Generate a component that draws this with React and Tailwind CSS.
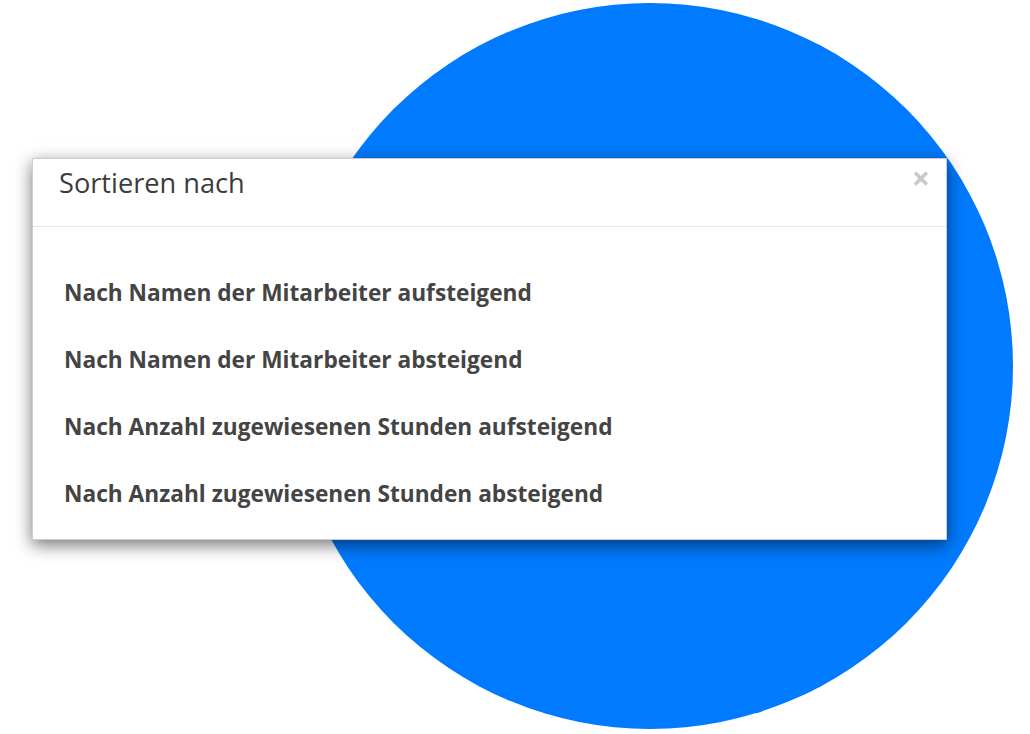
export default function App() {
  const items = [
    "Nach Namen der Mitarbeiter aufsteigend",
    "Nach Namen der Mitarbeiter absteigend",
    "Nach Anzahl zugewiesenen Stunden aufsteigend",
    "Nach Anzahl zugewiesenen Stunden absteigend",
  ];
  return (
    <div className="relative w-[1030px] h-[734px] bg-white overflow-hidden font-['Open_Sans',sans-serif]">
      <div className="absolute left-[287px] top-[3px] w-[726px] h-[726px] rounded-full bg-[#007bff]" />
      <div className="relative pt-[158px] pl-[32px]">
        <div className="w-[915px] h-[382px] bg-white border border-[rgba(0,0,0,0.2)] shadow-[0_5px_16px_rgba(0,0,0,0.55)] flex flex-col">
          <div className="h-[68px] border-b border-[#e5e5e5] flex items-center justify-between pl-[26px] pr-[16px]">
            <h4 className="text-[27.2px] text-[#3c3c3c] leading-none -mt-[20px]">Sortieren nach</h4>
            <span className="text-[32px] font-bold text-[#c8c8c8] leading-none -mt-[30px]">×</span>
          </div>
          <div className="pt-[33px] pl-[31px] flex flex-col">
            {items.map((t) => (
              <div key={t} className="h-[67px] flex items-center text-[22.7px] font-bold text-[#444]">
                {t}
              </div>
            ))}
          </div>
        </div>
      </div>
    </div>
  );
}
